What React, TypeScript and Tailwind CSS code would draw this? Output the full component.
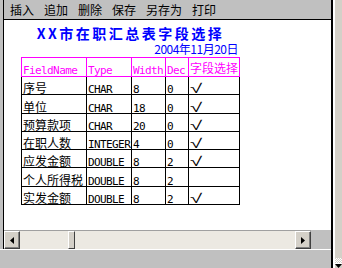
const MENU = ["插入", "追加", "删除", "保存", "另存为", "打印"];

const FIELDS = [
  { name: "序号", type: "CHAR", width: "8", dec: "0", picked: true },
  { name: "单位", type: "CHAR", width: "18", dec: "0", picked: true },
  { name: "预算款项", type: "CHAR", width: "20", dec: "0", picked: true },
  { name: "在职人数", type: "INTEGER", width: "4", dec: "0", picked: true },
  { name: "应发金额", type: "DOUBLE", width: "8", dec: "2", picked: true },
  { name: "个人所得税", type: "DOUBLE", width: "8", dec: "2", picked: false },
  { name: "实发金额", type: "DOUBLE", width: "8", dec: "2", picked: true },
];

const mono = "font-['DejaVu_Sans_Mono',monospace] text-[11px] tracking-[-0.6px]";
const headCell = "flex items-end border-r border-b border-t border-[#ff00ff] pl-[1px] text-[#ff00ff]";
const bodyCell = "flex items-end border-r border-b border-black pl-[1px]";

function Arrow({ dir }: { dir: "left" | "right" | "down" }) {
  const pts = dir === "left" ? "4,0 4,7 0,3.5" : dir === "right" ? "0,0 0,7 4,3.5" : "0,0 7,0 3.5,4";
  const w = dir === "down" ? 7 : 4;
  const h = dir === "down" ? 4 : 7;
  return (
    <svg width={w} height={h} viewBox={`0 0 ${w} ${h}`}>
      <polygon points={pts} fill="#000" />
    </svg>
  );
}

function ScrollButton({ dir }: { dir: "left" | "right" }) {
  return (
    <div className="flex h-full w-[16px] items-center justify-center border border-t-white border-l-white border-r-[#404040] border-b-[#404040] bg-[#d4d0c8] shadow-[inset_-1px_-1px_#808080]">
      <Arrow dir={dir} />
    </div>
  );
}

function FieldTable() {
  return (
    <div className="grid grid-cols-[66px_45px_34px_23px_51px] grid-rows-[20px_18px_19px_18px_18px_18px_19px_18px]">
      <div className={`${headCell} border-l`}>
        <span className={`${mono} leading-none`}>FieldName</span>
      </div>
      <div className={headCell}>
        <span className={`${mono} leading-none`}>Type</span>
      </div>
      <div className={headCell}>
        <span className={`${mono} leading-none`}>Width</span>
      </div>
      <div className={headCell}>
        <span className={`${mono} leading-none`}>Dec</span>
      </div>
      <div className={`${headCell} pb-[2px]`}>
        <span className="text-[12px] leading-none">字段选择</span>
      </div>

      {FIELDS.map((f) => (
        <div key={f.name} className="contents">
          <div className={`${bodyCell} border-l`}>
            <span className="text-[12px] leading-none">{f.name}</span>
          </div>
          <div className={bodyCell}>
            <span className={`${mono} leading-[8px]`}>{f.type}</span>
          </div>
          <div className={bodyCell}>
            <span className={`${mono} leading-[8px]`}>{f.width}</span>
          </div>
          <div className={bodyCell}>
            <span className={`${mono} leading-[8px]`}>{f.dec}</span>
          </div>
          <div className={bodyCell}>
            {/* picked mark, stretched to the wide check of the original */}
            <span className="inline-block origin-bottom-left scale-x-[1.7] font-['Liberation_Sans',sans-serif] text-[13px] leading-[10px]">
              {f.picked ? "√" : ""}
            </span>
          </div>
        </div>
      ))}
    </div>
  );
}

export default function App() {
  return (
    <div className="flex h-[268px] w-[342px] overflow-hidden bg-[#c0c0c0] font-['Noto_Sans_CJK_SC',sans-serif] text-black">
      <div className="flex w-[333px] flex-col border-r-2 border-black">
        <div className="ml-[3px] flex h-[249px] flex-col border-l border-black">
          {/* menu bar */}
          <div className="flex h-[20px] shrink-0 items-center gap-[10px] border-b border-black pl-[6px] text-[12px] leading-none">
            {MENU.map((m) => (
              <span key={m}>{m}</span>
            ))}
          </div>

          {/* report preview */}
          <div className="h-[210px] shrink-0 bg-white">
            <div className="ml-[17px] w-[219px]">
              <p className="mt-[6px] text-center text-[14px] font-bold leading-[14px] tracking-[2.5px] text-[#0000ff]">
                XX市在职汇总表字段选择
              </p>
              <p className="mt-[3px] pr-[2px] text-right text-[12px] leading-none tracking-[-0.5px] text-[#0000ff]">
                2004年11月20日
              </p>
              <div className="mt-[2px]">
                <FieldTable />
              </div>
            </div>
          </div>

          {/* horizontal scrollbar + corner */}
          <div className="flex h-[19px] shrink-0">
            <div className="flex w-[307px] border-t border-[#a0a0a0] bg-[#ece9e2]">
              <ScrollButton dir="left" />
              <div className="w-[48px]" />
              <div className="h-full w-[7px] border border-t-white border-l-white border-r-[#404040] border-b-[#404040] bg-[#d4d0c8]" />
              <div className="flex-1" />
              <ScrollButton dir="right" />
            </div>
          </div>
        </div>
        <div className="h-px bg-white" />
      </div>

      {/* edge of the outer vertical scrollbar */}
      <div className="flex w-[9px] flex-col border-l-2 border-white bg-[#d4d0c8]">
        <div className="flex-1" />
        <div className="h-[5px] bg-[repeating-conic-gradient(#ffffff_0_25%,#d4d0c8_0_50%)] bg-[length:2px_2px]" />
        <div className="flex h-[5px] items-end justify-center border-t border-white">
          <Arrow dir="down" />
        </div>
      </div>
    </div>
  );
}
